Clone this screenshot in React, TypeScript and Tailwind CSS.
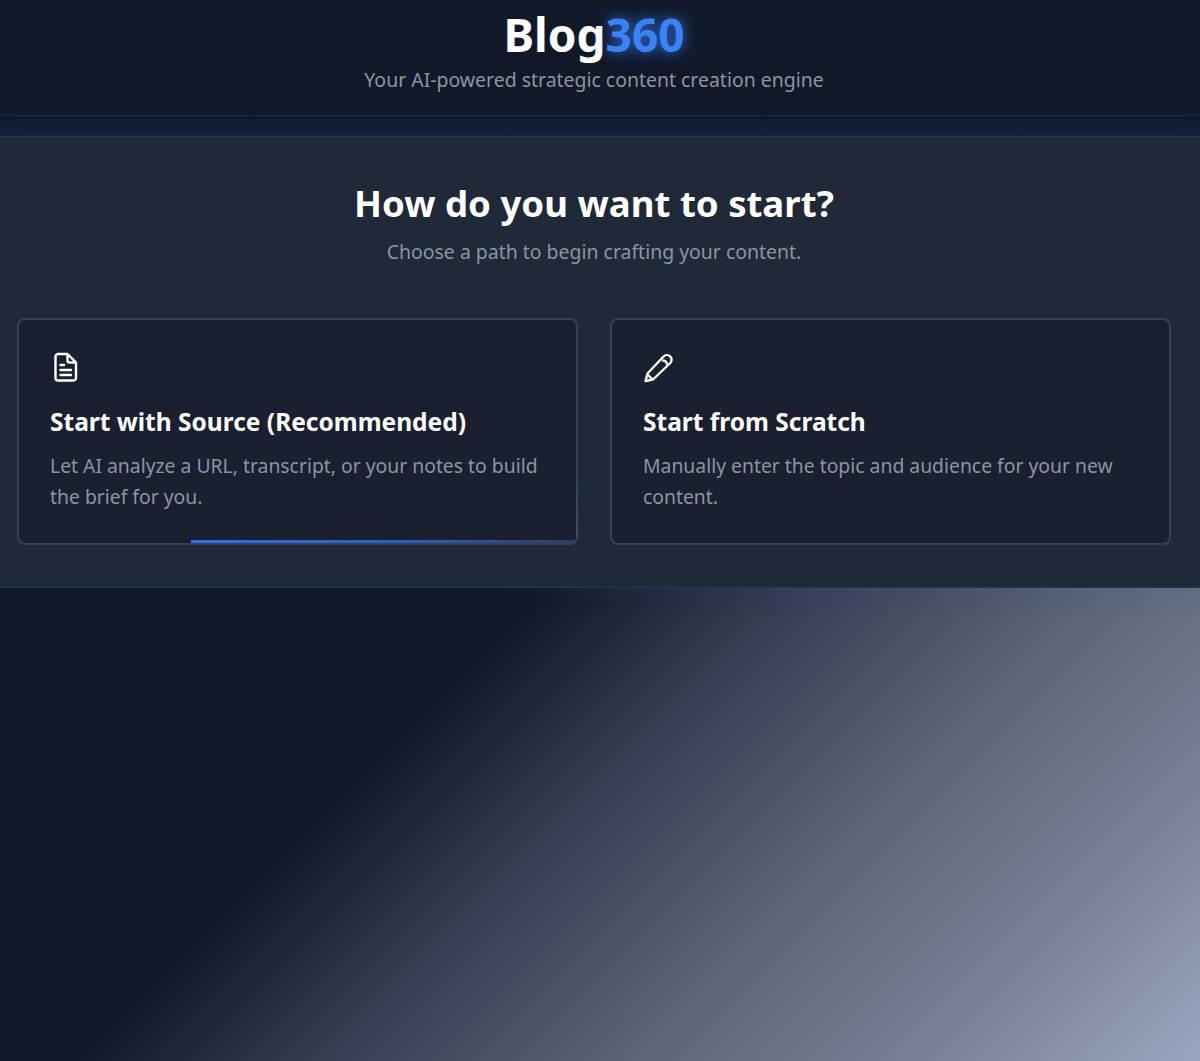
import React from "react";

function DocIcon() {
  return (
    <svg width="32" height="32" viewBox="0 0 32 32" fill="none" stroke="#ffffff" strokeWidth="2.4" strokeLinecap="round" strokeLinejoin="round" className="block">
      <path d="M8 3h9.500l8.500 8.500V27a2.500 2.500 0 0 1-2.500 2.500H8A2.500 2.500 0 0 1 5.500 27V5.500A2.500 2.500 0 0 1 8 3z" />
      <path d="M17.500 3.500V9.500a2 2 0 0 0 2 2h6" />
      <path d="M10.500 14h3.500M10.500 19h10.500M10.500 24h10.500" />
    </svg>
  );
}

function PenIcon() {
  return (
    <svg width="32" height="32" viewBox="0 0 32 32" fill="none" stroke="#ffffff" strokeWidth="2.3" strokeLinecap="round" strokeLinejoin="round" className="block">
      <path d="M2.500 30l2-7.500L20.500 5.500a4.600 4.600 0 0 1 6.800 6.500L10 28.500z" />
      <path d="M20 9.500a4.200 4.200 0 0 1 4 4" />
      <path d="M4.500 23.500L9 28" />
    </svg>
  );
}

function Card({ icon, title, text, bar }: { icon: React.ReactNode; title: string; text: string; bar?: boolean }) {
  return (
    <div className="relative h-[227px] rounded-lg border-2 border-[#374151] bg-[#1a2030] px-[31px] pt-[31px]">
      {icon}
      <h3 className="mt-[23px] text-[24.5px] leading-[32px] font-bold text-white">{title}</h3>
      <p className="mt-[12px] text-[19.35px] leading-[31px] text-[#8d94a4]">{text}</p>
      {bar && (
        <>
          <div className="absolute right-0 bottom-0 left-[172px] h-[3px] bg-gradient-to-r from-[#2f6fe8] via-[#2c62c4] to-[#2a3f68]" />
          <div className="absolute -right-[2px] bottom-[6px] h-[60px] w-[2px] bg-gradient-to-b from-transparent to-[#2f5a5e]" />
        </>
      )}
    </div>
  );
}

export default function App() {
  return (
    <div className="relative h-[1061px] w-[1200px] overflow-hidden bg-[linear-gradient(135deg,#0f172a_0%,#111827_50%,#3a3f55_62%,#5a6274_74%,#7a8298_88%,#9ca5c0_100%)] [font-family:'Noto_Sans','Open_Sans',sans-serif]">
      <header className="relative z-10 h-[116px] border-b border-[#232a3b] bg-[#111827] pt-[4px] pr-[12px] text-center">
        <h1 className="text-[46px] leading-[60px] font-bold text-white">
          Blog<span className="text-[#3b82f6] [text-shadow:0_0_12px_rgba(59,130,246,0.6),0_0_26px_rgba(59,130,246,0.5)]">360</span>
        </h1>
        <p className="mt-[2px] text-[19.45px] leading-[28px] text-[#8d94a4]">Your AI-powered strategic content creation engine</p>
      </header>
      <div className="h-[20px] bg-gradient-to-b from-[#10182c] to-[#142038]" />
      <main className="relative h-[452px] border-y border-[#2a3650] bg-[#1f2937] pt-[41px] pr-[29px] pl-[17px] shadow-[0_0_24px_rgba(37,99,235,0.12)]">
        <div className="text-center">
          <h2 className="text-[36.6px] leading-[50px] font-bold text-white">How do you want to start?</h2>
          <p className="mt-[10px] text-[19.45px] leading-[28px] text-[#8d94a4]">Choose a path to begin crafting your content.</p>
        </div>
        <div className="mt-[52px] grid grid-cols-2 gap-[32px]">
          <Card
            icon={<DocIcon />}
            title="Start with Source (Recommended)"
            text="Let AI analyze a URL, transcript, or your notes to build the brief for you."
            bar
          />
          <Card
            icon={<PenIcon />}
            title="Start from Scratch"
            text="Manually enter the topic and audience for your new content."
          />
        </div>
      </main>
    </div>
  );
}
